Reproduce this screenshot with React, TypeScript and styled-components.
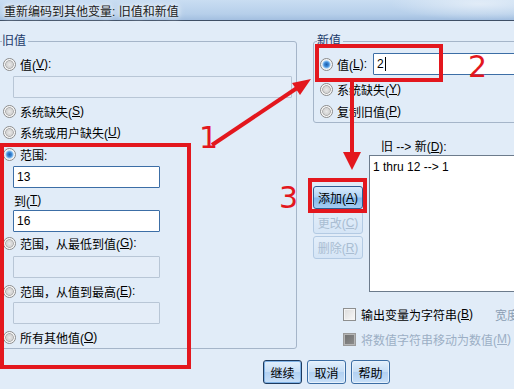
import styled, { createGlobalStyle } from 'styled-components'

const GlobalStyle = createGlobalStyle`
  html, body {
    margin: 0;
    padding: 0;
  }
  body {
    font-family: "Liberation Sans", "Noto Sans CJK SC", sans-serif;
    font-size: 12px;
  }
`

const Window = styled.div`
  position: relative;
  width: 514px;
  height: 389px;
  overflow: hidden;
  background: #e1ecf8;
  color: #000;
`

const TitleBar = styled.div`
  height: 20px;
  display: flex;
  align-items: center;
  padding-left: 4px;
  border-bottom: 1px solid #3e4f66;
  background: radial-gradient(ellipse 90px 16px at 480px 4px, rgba(255, 255, 255, 0.5), transparent),
    linear-gradient(#c9ddf2, #b6cfea 70%, #a3bfe0);
  color: #1a1a1a;
  text-shadow: 0 0 5px #fff, 0 0 8px #fff;
  white-space: nowrap;
`

const Body = styled.div`
  padding-top: 13px;
`

const Main = styled.div`
  display: flex;
  align-items: flex-start;
`

const Group = styled.fieldset<{ $width: number; $padLeft: number; $padTop: number }>`
  box-sizing: border-box;
  flex: none;
  min-width: 0;
  width: ${(p) => p.$width}px;
  margin: 0;
  padding: ${(p) => p.$padTop}px 0 1px ${(p) => p.$padLeft}px;
  border: 1px solid #a5b5c9;
  border-radius: 3px;
  display: flex;
  flex-direction: column;
  align-items: flex-start;
`

const LeftGroup = styled(Group)`
  margin-left: -4px;
`

const RightGroup = styled(Group)`
  margin-left: 16px;
`

const Legend = styled.legend`
  padding: 0 2px 0 0;
  line-height: 14px;
  color: #1d3b6b;
`

const Row = styled.div<{ $top?: number; $indent?: number; $height?: number }>`
  display: flex;
  align-items: center;
  height: ${(p) => p.$height ?? 20}px;
  margin-top: ${(p) => p.$top ?? 0}px;
  padding-left: ${(p) => p.$indent ?? 0}px;
  white-space: nowrap;
`

const Radio = styled.span<{ $checked?: boolean }>`
  flex: none;
  box-sizing: border-box;
  width: 13px;
  height: 13px;
  margin-right: 4px;
  border-radius: 50%;
  border: 1px solid #8b8b8b;
  background: ${(p) =>
    p.$checked
      ? 'radial-gradient(circle, #1d5fa9 0, #3d88d6 2.2px, #8fc6f4 3.6px, #eaeef2 4.4px, #fbfbfb 5.5px)'
      : 'radial-gradient(circle, #e9e9e9 0, #d2d2d2 3.2px, #a3a3a3 3.9px, #f4f4f4 4.6px, #ffffff 5.5px)'};
`

const Field = styled.div<{ $width: number; $top?: number; $disabled?: boolean; $left?: number }>`
  box-sizing: border-box;
  flex: none;
  width: ${(p) => p.$width}px;
  height: 22px;
  margin-top: ${(p) => p.$top ?? 0}px;
  margin-left: ${(p) => p.$left ?? 11}px;
  padding: 0 3px;
  display: flex;
  align-items: center;
  background: ${(p) => (p.$disabled ? '#e4edf8' : '#ffffff')};
  border: 1px solid ${(p) => (p.$disabled ? '#b8c6d6' : '#3c6ea6')};
  border-radius: 1px;
  font-size: 12px;
`

const Caret = styled.span`
  width: 1px;
  height: 14px;
  margin-left: 1px;
  background: #000;
`

const RightColumn = styled.div`
  display: flex;
  flex-direction: column;
`

const Mapping = styled.div`
  display: flex;
  margin-top: 17px;
  margin-left: 16px;
`

const ButtonStack = styled.div`
  display: flex;
  flex-direction: column;
  gap: 2px;
  padding-top: 46px;
`

const SideButton = styled.div<{ $disabled?: boolean }>`
  box-sizing: border-box;
  width: 50px;
  height: 23px;
  display: flex;
  align-items: center;
  justify-content: center;
  border-radius: 3px;
  border: 1px solid ${(p) => (p.$disabled ? '#b3cae3' : '#2f5d92')};
  background: ${(p) =>
    p.$disabled
      ? 'linear-gradient(#e3eefa, #d5e5f6)'
      : 'linear-gradient(#d9ebfc, #aed2f5 48%, #84b9ec 52%, #a4cdf2)'};
  color: ${(p) => (p.$disabled ? '#a9bdd2' : '#000')};
  white-space: nowrap;
`

const ListArea = styled.div`
  display: flex;
  flex-direction: column;
  margin-left: 6px;
`

const ListLabel = styled.div`
  line-height: 14px;
  padding-left: 12px;
  white-space: nowrap;
`

const ListBox = styled.div`
  box-sizing: border-box;
  width: 170px;
  height: 137px;
  margin-top: 1px;
  padding: 4px 3px;
  background: #fff;
  border: 1px solid #6c7b8c;
  line-height: 14px;
  white-space: nowrap;
`

const Options = styled.div`
  display: flex;
  flex-direction: column;
  margin-left: 46px;
  margin-top: 14px;
`

const CheckRow = styled.div<{ $top?: number; $disabled?: boolean }>`
  display: flex;
  align-items: center;
  height: 16px;
  margin-top: ${(p) => p.$top ?? 0}px;
  color: ${(p) => (p.$disabled ? '#9cafc5' : '#000')};
  white-space: nowrap;
`

const Check = styled.span<{ $disabled?: boolean }>`
  flex: none;
  box-sizing: border-box;
  width: 13px;
  height: 13px;
  margin-right: 5px;
  border: 1px solid ${(p) => (p.$disabled ? '#9a9a9a' : '#8e8f8f')};
  background: ${(p) =>
    p.$disabled
      ? 'linear-gradient(135deg, #6f6f6f, #8d8d8d)'
      : 'linear-gradient(135deg, #dcdcdc, #f8f8f8)'};
  box-shadow: inset 0 0 0 1px ${(p) => (p.$disabled ? '#b5b5b5' : '#f4f4f4')};
`

const Muted = styled.span`
  margin-left: 22px;
  color: #8a9db3;
`

const ButtonBar = styled.div`
  display: flex;
  gap: 5px;
  margin-top: 11px;
  padding-left: 263px;
`

const DialogButton = styled.div<{ $default?: boolean }>`
  box-sizing: border-box;
  width: 39px;
  height: 24px;
  display: flex;
  align-items: center;
  justify-content: center;
  border-radius: 3px;
  border: 1px solid ${(p) => (p.$default ? '#1d3a5e' : '#3b6da4')};
  box-shadow: ${(p) => (p.$default ? 'inset 0 0 0 1px #7fb2e6' : 'inset 0 0 0 1px #e6f1fc')};
  background: linear-gradient(#e2effc, #c7def6 48%, #b2d1f2 52%, #c9e0f8);
`

const RedBox = styled.div<{ $x: number; $y: number; $w: number; $h: number }>`
  position: absolute;
  left: ${(p) => p.$x}px;
  top: ${(p) => p.$y}px;
  width: ${(p) => p.$w}px;
  height: ${(p) => p.$h}px;
  box-sizing: border-box;
  border: 4px solid #e3171e;
  pointer-events: none;
`

const Mark = styled.span<{ $x: number; $y: number }>`
  position: absolute;
  left: ${(p) => p.$x}px;
  top: ${(p) => p.$y}px;
  font-family: "DejaVu Sans", sans-serif;
  font-size: 30px;
  line-height: 1;
  color: #e3171e;
`

const ArrowLayer = styled.svg`
  position: absolute;
  left: 0;
  top: 0;
  pointer-events: none;
`

export default function App() {
  return (
    <>
      <GlobalStyle />
      <Window>
        <TitleBar>重新编码到其他变量: 旧值和新值</TitleBar>
        <Body>
          <Main>
            <LeftGroup $width={301} $padLeft={5} $padTop={6}>
              <Legend>旧值</Legend>
              <Row $indent={1}>
                <Radio />值(<u>V</u>):
              </Row>
              <Field $width={279} $top={2} $disabled />
              <Row $indent={1} $top={3}>
                <Radio />系统缺失(<u>S</u>)
              </Row>
              <Row $indent={1} $top={1}>
                <Radio />系统或用户缺失(<u>U</u>)
              </Row>
              <Row $indent={1} $top={2}>
                <Radio $checked />范围:
              </Row>
              <Field $width={147} $top={2}>13</Field>
              <Row $indent={12} $top={2}>
                到(<u>T</u>)
              </Row>
              <Field $width={147}>16</Field>
              <Row $indent={1} $top={1}>
                <Radio />范围，从最低到值(<u>G</u>):
              </Row>
              <Field $width={147} $top={3} $disabled />
              <Row $indent={1} $top={3}>
                <Radio />范围，从值到最高(<u>E</u>):
              </Row>
              <Field $width={147} $top={1} $disabled />
              <Row $indent={1} $top={3}>
                <Radio />所有其他值(<u>O</u>)
              </Row>
            </LeftGroup>

            <RightColumn>
              <RightGroup $width={230} $padLeft={3} $padTop={5}>
                <Legend>新值</Legend>
                <Row $indent={3} $height={22}>
                  <Radio $checked />值(<u>L</u>):
                  <Field $width={200} $left={6}>
                    2<Caret />
                  </Field>
                </Row>
                <Row $indent={3} $top={4}>
                  <Radio />系统缺失(<u>Y</u>)
                </Row>
                <Row $indent={3} $top={2}>
                  <Radio />复制旧值(<u>P</u>)
                </Row>
              </RightGroup>

              <Mapping>
                <ButtonStack>
                  <SideButton>
                    添加(<u>A</u>)
                  </SideButton>
                  <SideButton $disabled>
                    更改(<u>C</u>)
                  </SideButton>
                  <SideButton $disabled>
                    删除(<u>R</u>)
                  </SideButton>
                </ButtonStack>
                <ListArea>
                  <ListLabel>
                    旧 --&gt; 新(<u>D</u>):
                  </ListLabel>
                  <ListBox>1 thru 12 --&gt; 1</ListBox>
                </ListArea>
              </Mapping>

              <Options>
                <CheckRow>
                  <Check />
                  输出变量为字符串(<u>B</u>)
                  <Muted>宽度</Muted>
                </CheckRow>
                <CheckRow $top={9} $disabled>
                  <Check $disabled />
                  将数值字符串移动为数值(<u>M</u>)
                </CheckRow>
              </Options>
            </RightColumn>
          </Main>

          <ButtonBar>
            <DialogButton $default>继续</DialogButton>
            <DialogButton>取消</DialogButton>
            <DialogButton>帮助</DialogButton>
          </ButtonBar>
        </Body>

        <RedBox $x={0} $y={143} $w={191} $h={226} />
        <RedBox $x={315} $y={44} $w={128} $h={38} />
        <RedBox $x={308} $y={178} $w={59} $h={35} />

        <Mark $x={199} $y={123}>1</Mark>
        <Mark $x={468} $y={52}>2</Mark>
        <Mark $x={279} $y={183}>3</Mark>

        <ArrowLayer width={514} height={389}>
          <line x1={212} y1={145} x2={297} y2={88} stroke="#e3171e" strokeWidth={4} />
          <polygon points="311,79 300,95 292,83" fill="#e3171e" />
          <line x1={352} y1={82} x2={352} y2={154} stroke="#e3171e" strokeWidth={4} />
          <polygon points="343,152 361,152 352,170" fill="#e3171e" />
        </ArrowLayer>
      </Window>
    </>
  )
}
